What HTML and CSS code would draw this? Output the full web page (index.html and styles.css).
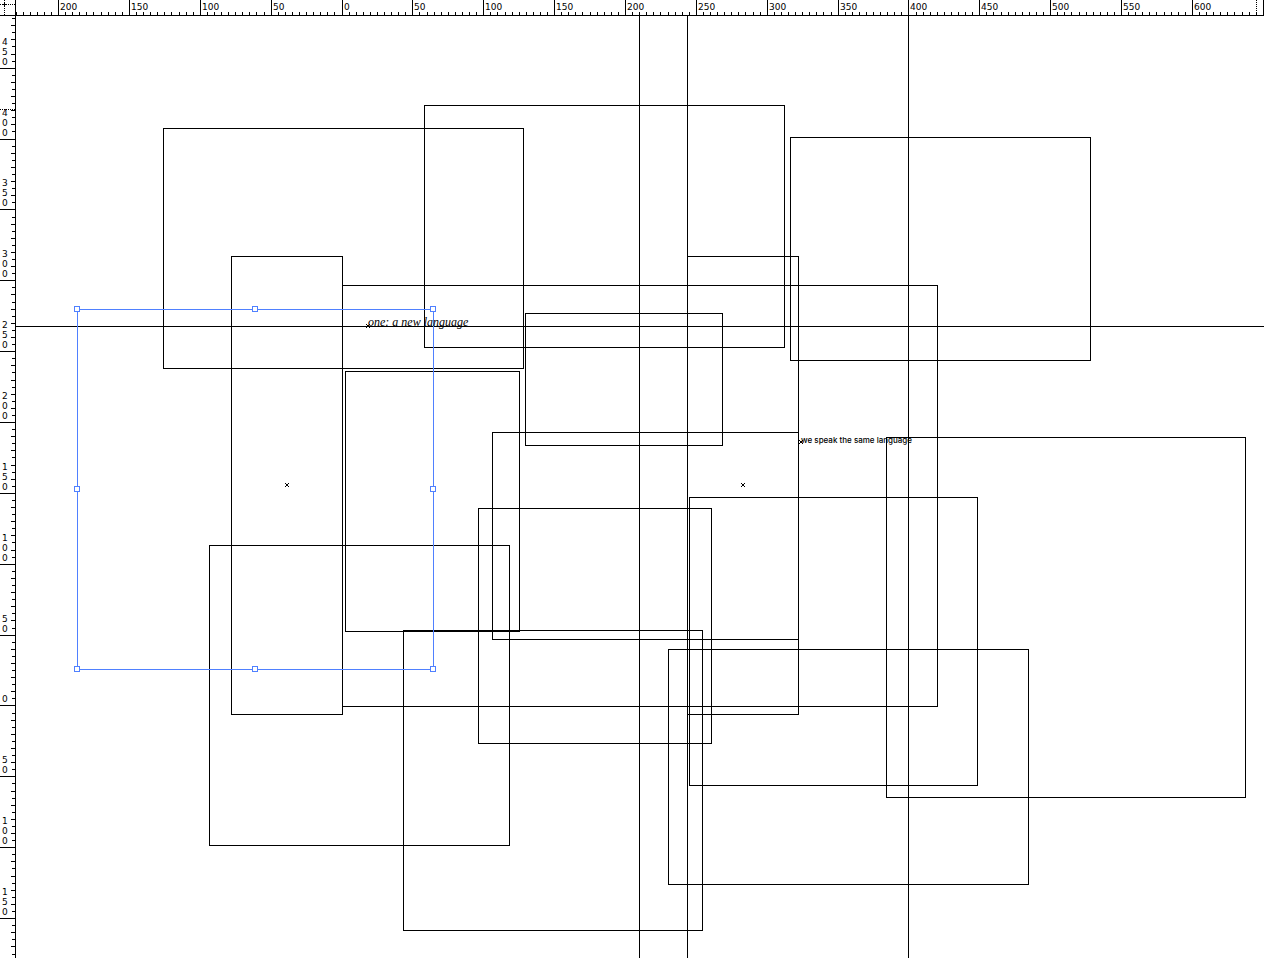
FILE: index.html
```html
<!DOCTYPE html>
<html lang="en">
<head>
<meta charset="utf-8">
<title>Layout</title>
<link rel="stylesheet" href="styles.css">
</head>
<body>
<div class="workspace">
  <div class="origin"><svg class="cross" viewBox="0 0 15 15" aria-hidden="true"><path d="M4.5 0V15M0 4.5H15"/><path class="solid" d="M3 4.5H6M4.5 3V6"/></svg></div>
  <div class="ruler ruler-x" id="ruler-x"></div>
  <div class="ruler ruler-y" id="ruler-y"></div>
  <main class="canvas">
    <svg class="art" aria-hidden="true">
      <g class="guides">
        <path d="M623.5 0V2000M671.5 0V2000M892.5 0V2000M0 310.5H4000"/>
      </g>
      <g class="frames">
        <rect x="147.5" y="112.5" width="360" height="240"/>
        <rect x="408.5" y="89.5" width="360" height="242"/>
        <rect x="774.5" y="121.5" width="300" height="223"/>
        <rect x="215.5" y="240.5" width="111" height="458"/>
        <rect x="671.5" y="240.5" width="111" height="458"/>
        <rect x="326.5" y="269.5" width="595" height="421"/>
        <rect x="509.5" y="297.5" width="197" height="132"/>
        <rect x="329.5" y="355.5" width="174" height="260"/>
        <rect x="476.5" y="416.5" width="306" height="207"/>
        <rect x="462.5" y="492.5" width="233" height="235"/>
        <rect x="193.5" y="529.5" width="300" height="300"/>
        <rect x="387.5" y="614.5" width="299" height="300"/>
        <rect x="673.5" y="481.5" width="288" height="288"/>
        <rect x="652.5" y="633.5" width="360" height="235"/>
        <rect x="870.5" y="421.5" width="359" height="360"/>
      </g>
      <path class="mark" d="M269 467l4 4m0-4l-4 4M725 467l4 4m0-4l-4 4M350 308l4 4m0-4l-4 4M783 424l4 4m0-4l-4 4"/>
      <g class="selection">
        <rect x="61.5" y="293.5" width="356" height="360"/>
        <g class="handles">
          <rect x="58.5" y="290.5" width="5" height="5"/>
          <rect x="236.5" y="290.5" width="5" height="5"/>
          <rect x="414.5" y="290.5" width="5" height="5"/>
          <rect x="58.5" y="470.5" width="5" height="5"/>
          <rect x="414.5" y="470.5" width="5" height="5"/>
          <rect x="58.5" y="650.5" width="5" height="5"/>
          <rect x="236.5" y="650.5" width="5" height="5"/>
          <rect x="414.5" y="650.5" width="5" height="5"/>
        </g>
      </g>
    </svg>
    <span class="note note-script">one: a new language</span>
    <span class="note note-sans">we speak the same language</span>
  </main>
</div>
<script src="ruler.js"></script>
</body>
</html>
```
FILE: styles.css
```css
* { box-sizing: border-box; }
html, body { height: 100%; }
body {
  margin: 0;
  overflow: hidden;
  background: #fff;
  color: #000;
  font-family: "DejaVu Sans", sans-serif;
}
.workspace {
  display: grid;
  grid-template: 16px 1fr / 16px 1fr;
  width: 100%;
  height: 100vh;
}
.origin {
  border-right: 1px solid #000;
  border-bottom: 1px solid #000;
}
.cross { display: block; width: 15px; height: 15px; }
.cross path { fill: none; stroke: #000; stroke-dasharray: 1 1; shape-rendering: crispEdges; }
.cross .solid { stroke-dasharray: none; }
.ruler { position: relative; overflow: hidden; }
.ruler-x { border-bottom: 1px solid #000; }
.ruler-y { border-right: 1px solid #000; }
.tick { position: absolute; background: #000; }
.ruler-x .tick { bottom: 0; width: 1px; height: 3px; }
.ruler-y .tick { right: 0; width: 3px; height: 1px; }
.ruler-y .even { width: 4px; }
.ruler-x .major { height: 15px; }
.ruler-y .major { width: 15px; }
.label { position: absolute; font-size: 9px; line-height: 10px; }
.ruler-x .label { top: 2px; margin-left: 2px; }
.ruler-y .label { left: 2px; display: flex; flex-direction: column; transform: translateY(-100%); }
.pointer { position: absolute; }
.pointer-x { height: 15px; border-left: 1px dotted #000; }
.pointer-y { width: 15px; border-top: 1px dotted #000; }
.canvas { position: relative; overflow: hidden; }
.art { display: block; width: 100%; height: 100%; fill: none; stroke: #000; shape-rendering: crispEdges; }
.mark { shape-rendering: auto; }
.selection { stroke: #4f80ff; }
.handles { fill: #fff; }
.note { position: absolute; white-space: nowrap; }
.note-script {
  left: 352px;
  top: 299px;
  font: italic 12px/14px "Liberation Serif", serif;
}
.note-sans {
  left: 785px;
  top: 419px;
  font: 500 8px/10px Inter, sans-serif;
}
```
FILE: ruler.js
```js
const STEP = 70.866;
const DIVISIONS = 10;
const LABEL_ROOM = 24;

function add(parent, className, side, offset, text) {
  const node = document.createElement('div');
  node.className = className;
  node.style[side] = offset + 'px';
  if (text !== undefined) node.textContent = text;
  parent.append(node);
  return node;
}

function build(ruler, side, zero, length, vertical) {
  ruler.replaceChildren();
  const minor = STEP / DIVISIONS;
  const first = Math.ceil(-zero / minor);
  for (let i = first; zero + i * minor < length; i++) {
    const at = Math.floor(zero + i * minor);
    const major = i % DIVISIONS === 0;
    add(ruler, 'tick' + (major ? ' major' : i % 2 === 0 ? ' even' : ''), side, at);
    if (!major) continue;
    const value = String(Math.abs(i / DIVISIONS) * 50);
    if (!vertical) {
      if (at + LABEL_ROOM < length) add(ruler, 'label', side, at, value);
    } else {
      const label = add(ruler, 'label', side, at - 1);
      for (const digit of value) {
        const span = document.createElement('span');
        span.textContent = digit;
        label.append(span);
      }
    }
  }
}

function draw() {
  const x = document.getElementById('ruler-x');
  const y = document.getElementById('ruler-y');
  build(x, 'left', 326.03, x.clientWidth, false);
  build(y, 'top', 689.99, y.clientHeight, true);
  add(x, 'pointer pointer-x', 'left', 1240);
  add(y, 'pointer pointer-y', 'top', 93);
}

draw();
window.addEventListener('resize', draw);
```
